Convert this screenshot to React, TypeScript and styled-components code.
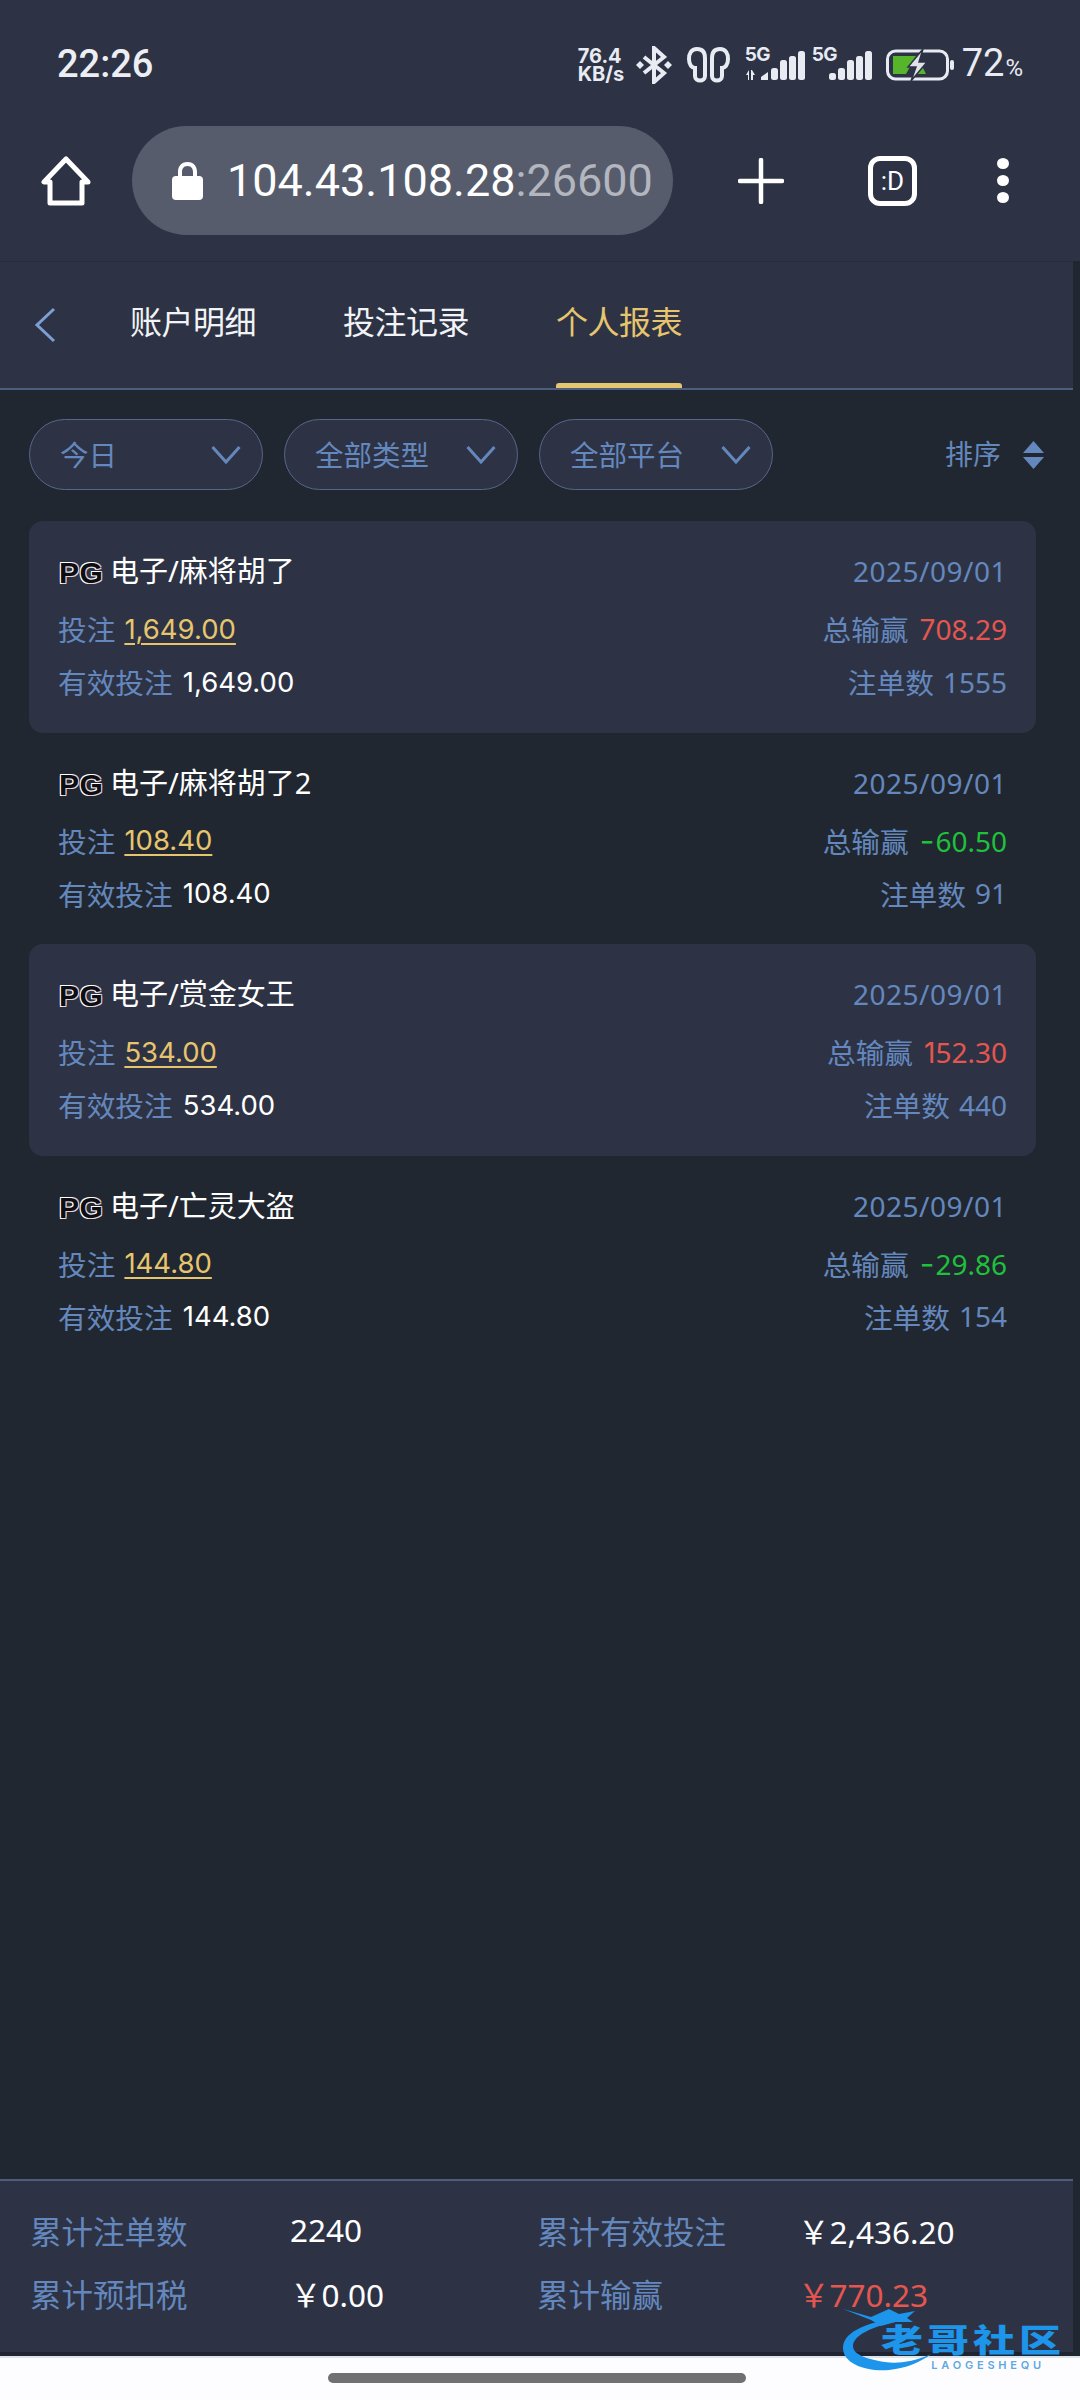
import styled, { createGlobalStyle } from "styled-components";

const GlobalStyle = createGlobalStyle`
    html, body {
        margin: 0;
        padding: 0;
        background: #fdfdff;
    }
    * {
        box-sizing: border-box;
    }
`

const font = `"Noto Sans", "Noto Sans CJK SC", sans-serif`
const cjk = `"Noto Sans CJK SC", "Noto Sans", sans-serif`
const blue = "#6488bd"
const yellow = "#e6c56e"
const red = "#e5564e"
const green = "#1fc13c"

type Report = {
    game: string
    date: string
    bet: string
    win: string
    orders: string
    loss?: boolean
}

const reports: Report[] = [
    {game: "电子/麻将胡了", date: "2025/09/01", bet: "1,649.00", win: "708.29", orders: "1555"},
    {game: "电子/麻将胡了2", date: "2025/09/01", bet: "108.40", win: "-60.50", orders: "91", loss: true},
    {game: "电子/赏金女王", date: "2025/09/01", bet: "534.00", win: "152.30", orders: "440"},
    {game: "电子/亡灵大盗", date: "2025/09/01", bet: "144.80", win: "-29.86", orders: "154", loss: true},
]

const Signal = ({arrows}: { arrows?: boolean }) => (
    <SignalBox>
        <SignalName>5G</SignalName>
        <svg width="61" height="34" viewBox="0 0 61 34" fill="#e8ebf2">
            {arrows && <path d="M1 27l3-5v10H3v-5zM6 22h1l3 5H8v5H6z"/>}
            {arrows && <path d="M16 32v-3l7-5v8z"/>}
            {!arrows && <rect x="17" y="25" width="7" height="7" rx="2.5"/>}
            <rect x="26" y="20" width="7" height="12" rx="2.5"/>
            <rect x="35" y="12" width="7" height="20" rx="2.5"/>
            <rect x="44" y="8" width="7" height="24" rx="2.5"/>
            <rect x="53" y="3" width="7" height="29" rx="2.5"/>
        </svg>
    </SignalBox>
)

const Chevron = () => (
    <svg width="30" height="20" viewBox="0 0 30 20" fill="none" stroke={blue} strokeWidth="3">
        <path d="M1.5 2l13.5 15L28.5 2"/>
    </svg>
)

const Logo = () => <PgLogo>PG</PgLogo>

export default function App() {
    return (
        <Page>
            <GlobalStyle/>
            <TopArea>
                <StatusBar>
                    <Time>22:26</Time>
                    <StatusIcons>
                        <Speed>76.4<br/>KB/s</Speed>
                        <svg width="36" height="38" viewBox="0 0 36 38" fill="none" stroke="#e8ebf2" strokeWidth="4">
                            <path d="M8 11l20 16-10 9V2l10 9L8 27"/>
                            <path d="M0 19l4-4 4 4-4 4zM28 19l4-4 4 4-4 4z" fill="#e8ebf2" stroke="none"/>
                        </svg>
                        <svg width="43" height="36" viewBox="0 0 43 36" fill="none" stroke="#e8ebf2" strokeWidth="4">
                            <path d="M10 2C4 2 2 7 2 12c0 6 3 9 6 9v8c0 6 10 6 10 0V11C18 5 15 2 10 2z"/>
                            <path d="M33 2c6 0 8 5 8 10 0 6-3 9-6 9v8c0 6-10 6-10 0V11c0-6 3-9 8-9z"/>
                        </svg>
                        <SignalGroup>
                            <Signal arrows/>
                            <Signal/>
                        </SignalGroup>
                        <svg width="69" height="32" viewBox="0 0 69 32">
                            <rect x="1.500" y="2" width="60" height="28" rx="8" fill="none" stroke="#e8ebf2" strokeWidth="3"/>
                            <path d="M7 7h23L20 25H7z" fill="#57b52b"/>
                            <path d="M34 13l6 12h-11z" fill="#57b52b"/>
                            <path d="M37 0L22 18h8l-5 14 16-19h-8z" fill="#dfe2e8" stroke="#2d3345" strokeWidth="1.500"/>
                            <rect x="64" y="11" width="4" height="10" rx="2" fill="#e8ebf2"/>
                        </svg>
                        <Battery>72<small>%</small></Battery>
                    </StatusIcons>
                </StatusBar>
                <Toolbar>
                    <svg width="50" height="50" viewBox="0 0 50 50" fill="none" stroke="#fff" strokeWidth="5" strokeLinejoin="round">
                        <path d="M25 3L3 26h6v21h32V26h6z"/>
                    </svg>
                    <UrlPill>
                        <svg width="31" height="38" viewBox="0 0 31 38" fill="#fff">
                            <path d="M15.500 0C9 0 6 4.500 6 10v4H4a4 4 0 0 0-4 4v16a4 4 0 0 0 4 4h23a4 4 0 0 0 4-4V18a4 4 0 0 0-4-4h-2v-4c0-5.500-3-10-9.500-10zm0 4c4 0 5.500 3 5.500 6v4H10v-4c0-3 1.500-6 5.500-6z"/>
                        </svg>
                        <Url>104.43.108.28<span>:26600</span></Url>
                    </UrlPill>
                    <ToolIcons>
                        <svg width="46" height="46" viewBox="0 0 46 46" stroke="#fff" strokeWidth="4.500" strokeLinecap="round">
                            <path d="M23 2v42M2 23h42"/>
                        </svg>
                        <TabIcon>:D</TabIcon>
                        <Dots><i/><i/><i/></Dots>
                    </ToolIcons>
                </Toolbar>
            </TopArea>

            <Body>
                <Content>
                    <Tabs>
                        <svg width="22" height="36" viewBox="0 0 22 36" fill="none" stroke="#7d9fd4" strokeWidth="3">
                            <path d="M20 2L3 18l17 16"/>
                        </svg>
                        <TabList>
                            <Tab>账户明细</Tab>
                            <Tab>投注记录</Tab>
                            <Tab $active>个人报表</Tab>
                        </TabList>
                    </Tabs>

                    <Filters>
                        <FilterPill>今日<Chevron/></FilterPill>
                        <FilterPill>全部类型<Chevron/></FilterPill>
                        <FilterPill>全部平台<Chevron/></FilterPill>
                        <Sort>
                            排序
                            <svg width="21" height="28" viewBox="0 0 21 28" fill={blue}>
                                <path d="M10.500 0L21 12H0zM0 16h21L10.500 28z"/>
                            </svg>
                        </Sort>
                    </Filters>

                    <List>
                        {reports.map((r, i) => (
                            <Row key={r.game} $striped={i % 2 === 0}>
                                <Column>
                                    <Title><Logo/>{r.game}</Title>
                                    <Line><Label>投注</Label><BetValue>{r.bet}</BetValue></Line>
                                    <Line><Label>有效投注</Label><Value>{r.bet}</Value></Line>
                                </Column>
                                <Column $right>
                                    <DateText>{r.date}</DateText>
                                    <Line><Label>总输赢</Label><WinValue $loss={r.loss}>{r.win}</WinValue></Line>
                                    <Line><Label>注单数</Label><Count>{r.orders}</Count></Line>
                                </Column>
                            </Row>
                        ))}
                    </List>

                    <Footer>
                        <FooterCell>
                            <FooterLabel>累计注单数</FooterLabel>
                            <FooterValue $left={260}>2240</FooterValue>
                        </FooterCell>
                        <FooterCell>
                            <FooterLabel>累计有效投注</FooterLabel>
                            <FooterValue $left={261}>￥2,436.20</FooterValue>
                        </FooterCell>
                        <FooterCell>
                            <FooterLabel>累计预扣税</FooterLabel>
                            <FooterValue $left={260}>￥0.00</FooterValue>
                        </FooterCell>
                        <FooterCell>
                            <FooterLabel>累计输赢</FooterLabel>
                            <FooterValue $left={261} $red>￥770.23</FooterValue>
                        </FooterCell>
                    </Footer>
                </Content>
            </Body>

            <NavBar>
                <HomeBar/>
            </NavBar>

            <Watermark>
                <svg width="92" height="66" viewBox="0 0 92 66" fill="#1c95ea">
                    <path d="M58 10C20 15 2 26 2 40c0 16 24 24 46 22 18-2 32-8 42-16-18 8-34 10-46 8-20-3-32-8-32-16 0-10 18-20 48-25z"/>
                    <path d="M2 1l28 8L48 1l10 5 16-3-8 7 6 4-18 0-14 4-10-6z"/>
                </svg>
                <WatermarkText>
                    <WatermarkTitle>老哥社区</WatermarkTitle>
                    <WatermarkSub>LAOGESHEQU</WatermarkSub>
                </WatermarkText>
            </Watermark>
        </Page>
    );
}

const Page = styled.div`
    position: relative;
    width: 1080px;
    height: 2400px;
    overflow: hidden;
    display: flex;
    flex-direction: column;
    background-color: #fdfdff;
    font-family: ${font};
`

const TopArea = styled.header`
    flex: 0 0 261px;
    background-color: #2d3345;
    color: #fff;
`

const StatusBar = styled.div`
    height: 126px;
    padding: 41px 57px 0 57px;
    display: flex;
    justify-content: space-between;
    align-items: flex-start;
`

const Time = styled.div`
    font-family: Roboto, sans-serif;
    font-weight: 500;
    font-size: 38px;
    line-height: 46px;
    color: #eceef4;
`

const StatusIcons = styled.div`
    display: flex;
    align-items: center;
    height: 44px;
    margin-top: 2px;
    gap: 15px;
    color: #e8ebf2;
`

const Speed = styled.div`
    font-family: Inter, sans-serif;
    font-weight: 700;
    font-size: 20px;
    line-height: 18px;
    width: 48px;
    margin-right: -5px;
    white-space: nowrap;
`

const SignalGroup = styled.div`
    display: flex;
    gap: 6px;
    margin-right: -2px;
`

const SignalBox = styled.div`
    position: relative;
    width: 61px;
    height: 34px;
`

const SignalName = styled.span`
    position: absolute;
    left: 0;
    top: -4px;
    font-family: Inter, sans-serif;
    font-weight: 700;
    font-size: 19px;
    line-height: 22px;
    letter-spacing: -0.5px;
    color: #e8ebf2;
`

const Battery = styled.div`
    font-family: Roboto, sans-serif;
    font-size: 38px;
    line-height: 44px;
    white-space: nowrap;
    margin-left: -8px;

    small {
        font-size: 24px;
        margin-left: 1px;
    }
`

const Toolbar = styled.div`
    height: 109px;
    padding-left: 41px;
    display: flex;
    align-items: center;
`

const UrlPill = styled.div`
    width: 541px;
    height: 109px;
    margin-left: 41px;
    border-radius: 55px;
    background-color: #565c6c;
    display: flex;
    align-items: center;
    padding-left: 40px;
    gap: 24px;
`

const Url = styled.div`
    font-family: Roboto, sans-serif;
    font-size: 45px;
    white-space: nowrap;
    color: #fff;

    span {
        color: #b3b6be;
    }
`

const ToolIcons = styled.div`
    display: flex;
    align-items: center;
    margin-left: 65px;
    gap: 84px;
`

const TabIcon = styled.div`
    width: 49px;
    height: 50px;
    border: 5px solid #fff;
    border-radius: 12px;
    display: flex;
    align-items: center;
    justify-content: center;
    font-family: Roboto, sans-serif;
    font-size: 26px;
    color: #fff;
`

const Dots = styled.div`
    display: flex;
    flex-direction: column;
    gap: 6px;
    margin-left: -4px;

    i {
        display: block;
        width: 12px;
        height: 11px;
        border-radius: 50%;
        background-color: #fff;
    }
`

const Body = styled.div`
    flex: 1;
    min-height: 0;
    display: flex;
    background-color: #212730;
`

const Content = styled.main`
    width: 1073px;
    display: flex;
    flex-direction: column;
`

const Tabs = styled.nav`
    height: 129px;
    padding-left: 34px;
    display: flex;
    align-items: center;
    background-color: #2d3345;
    border-top: 1px solid #272c3a;
    border-bottom: 2px solid #4d5d80;
`

const TabList = styled.div`
    display: flex;
    align-self: stretch;
    margin-left: 74px;
    gap: 87px;
`

const Tab = styled.div<{ $active?: boolean }>`
    position: relative;
    display: flex;
    align-items: center;
    padding-bottom: 10px;
    font-family: ${cjk};
    font-size: 32px;
    width: 126px;
    white-space: nowrap;
    letter-spacing: -0.5px;
    color: ${props => props.$active ? yellow : "#f2f3f6"};

    &::after {
        content: "";
        display: ${props => props.$active ? "block" : "none"};
        position: absolute;
        left: 0;
        right: 0;
        bottom: 0;
        height: 5px;
        border-radius: 3px 3px 0 0;
        background-color: ${yellow};
    }
`

const Filters = styled.div`
    height: 131px;
    padding: 29px 29px 30px 29px;
    display: flex;
    gap: 21px;
`

const FilterPill = styled.div`
    width: 234px;
    height: 71px;
    padding: 0 21px 3px 30px;
    border: 1.5px solid #56678b;
    border-radius: 36px;
    background-color: #2d3345;
    display: flex;
    align-items: center;
    justify-content: space-between;
    font-family: ${cjk};
    font-size: 28.5px;
    color: ${blue};
    white-space: nowrap;

    svg {
        margin-top: 3px;
    }
`

const Sort = styled.div`
    margin-left: auto;
    height: 71px;
    padding-bottom: 3px;
    display: flex;
    align-items: center;
    gap: 22px;
    font-family: ${cjk};
    font-size: 28px;
    color: ${blue};

    svg {
        margin-top: 3px;
    }
`

const List = styled.section`
    flex: 1;
    padding: 0 37px 0 29px;
    display: flex;
    flex-direction: column;
`

const Row = styled.article<{ $striped: boolean }>`
    height: 211.5px;
    padding: 21px 29px 0 29px;
    border-radius: 14px;
    background-color: ${props => props.$striped ? "#2d3345" : "transparent"};
    display: flex;
    justify-content: space-between;
`

const Column = styled.div<{ $right?: boolean }>`
    display: flex;
    flex-direction: column;
    align-items: ${props => props.$right ? "flex-end" : "flex-start"};
`

const Title = styled.div`
    height: 54px;
    margin-bottom: 6px;
    display: flex;
    align-items: center;
    gap: 3px;
    font-family: ${font};
    font-size: 29px;
    color: #fff;
`

const PgLogo = styled.span`
    width: 48px;
    height: 24px;
    display: inline-block;
    margin: 8px 0 0 1px;
    font-family: "Liberation Sans", sans-serif;
    font-weight: 700;
    font-size: 30px;
    line-height: 24px;
    letter-spacing: 0.5px;
    color: #0c0e14;
    white-space: nowrap;
    text-shadow: 1px 1px 0 #e6d2d8, -1px -1px 0 #fff, 1px -1px 0 #d8c8d8, -1px 1px 0 #fff;
`

const DateText = styled.div`
    height: 54px;
    margin-bottom: 6px;
    display: flex;
    align-items: center;
    padding-top: 4px;
    font-size: 28px;
    letter-spacing: 0.5px;
    color: ${blue};
`

const Line = styled.div`
    height: 53px;
    display: flex;
    align-items: center;
    gap: 9px;
    font-size: 28px;
    white-space: nowrap;
`

const Label = styled.span`
    font-size: 28.7px;
    color: ${blue};
`

const Count = styled.span`
    color: ${blue};
`

const Value = styled.span`
    margin-left: 1px;
    font-family: Inter, sans-serif;
    font-size: 27.5px;
    color: #fff;
`

const BetValue = styled.span`
    font-family: Inter, sans-serif;
    font-size: 27.5px;
    color: ${yellow};
    text-decoration: underline;
    text-underline-offset: 4px;
    text-decoration-thickness: 2px;
`

const WinValue = styled.span<{ $loss?: boolean }>`
    display: inline-block;
    margin-left: 2px;
    color: ${props => props.$loss ? green : red};

    &::first-letter {
        font-family: Inter, sans-serif;
        font-size: ${props => props.$loss ? "32px" : "28px"};
        letter-spacing: ${props => props.$loss ? "1px" : "0"};
    }
`

const Footer = styled.footer`
    height: 177px;
    padding: 17px 0 0 30px;
    display: grid;
    grid-template-columns: 507px 1fr;
    grid-auto-rows: 63px;
    background-color: #2d3345;
    border-top: 2px solid #4d5d80;
    border-bottom: 4px solid #1f2430;
`

const FooterCell = styled.div`
    position: relative;
    display: flex;
    align-items: center;
`

const FooterLabel = styled.span`
    font-family: ${cjk};
    font-size: 31.5px;
    color: ${blue};
    white-space: nowrap;
`

const FooterValue = styled.span<{ $left: number; $red?: boolean }>`
    position: absolute;
    left: ${props => props.$left}px;
    font-family: ${font};
    font-size: 31.5px;
    color: ${props => props.$red ? red : "#fff"};
    white-space: nowrap;
`

const NavBar = styled.div`
    flex: 0 0 44px;
    padding-top: 15px;
    display: flex;
    justify-content: center;
    background-color: #fdfdff;
    border-top: 2px solid #dde3ea;
`

const HomeBar = styled.div`
    width: 418px;
    height: 10px;
    margin-left: -6px;
    border-radius: 5px;
    background-color: #707070;
`

const Watermark = styled.div`
    position: absolute;
    left: 841px;
    top: 2308px;
    display: flex;
    align-items: flex-start;
    pointer-events: none;
`

const WatermarkText = styled.div`
    margin-left: -52px;
    margin-top: 12px;
    display: flex;
    flex-direction: column;
    align-items: flex-end;
`

const WatermarkTitle = styled.div`
    font-family: ${cjk};
    font-weight: 900;
    font-size: 42px;
    line-height: 36px;
    letter-spacing: 4px;
    color: #1c95ea;
    white-space: nowrap;
    transform: scaleY(0.75);
`

const WatermarkSub = styled.div`
    margin: 2px 20px 0 0;
    font-family: Inter, sans-serif;
    font-weight: 600;
    font-size: 11px;
    letter-spacing: 3.8px;
    color: #5fa8e0;
    white-space: nowrap;
`
